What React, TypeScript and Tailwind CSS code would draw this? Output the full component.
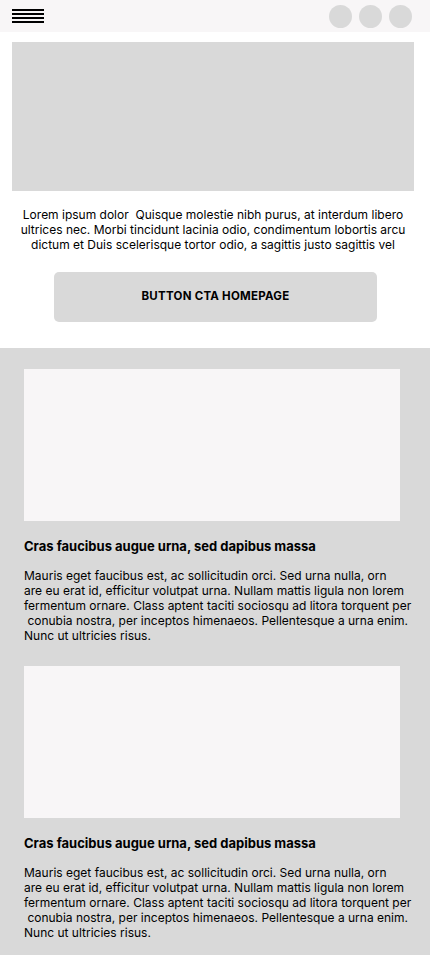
const font = { fontFamily: 'Inter, "Liberation Sans", sans-serif' };

const intro = [
  'Lorem ipsum dolor\u00a0 Quisque molestie nibh purus, at interdum libero',
  'ultrices nec. Morbi tincidunt lacinia odio, condimentum lobortis arcu',
  'dictum et Duis scelerisque tortor odio, a sagittis justo sagittis vel',
];

const body = [
  'Mauris eget faucibus est, ac sollicitudin orci. Sed urna nulla, orn',
  'are eu erat id, efficitur volutpat urna. Nullam mattis ligula non lorem',
  'fermentum ornare. Class aptent taciti sociosqu ad litora torquent per',
  ' conubia nostra, per inceptos himenaeos. Pellentesque a urna enim.',
  'Nunc ut ultricies risus.',
];

function Card() {
  return (
    <div>
      <div className="h-[152px] w-[376px] bg-[#f8f6f7]" />
      <h3 className="mt-[17px] text-[13px] font-bold leading-[16px] text-black">
        Cras faucibus augue urna, sed dapibus massa
      </h3>
      <p className="mt-[14px] whitespace-pre text-[12px] leading-[15px] text-black">
        {body.join('\n')}
      </p>
    </div>
  );
}

export default function App() {
  return (
    <div className="w-[430px] bg-white" style={font}>
      <header className="flex h-8 items-center justify-between bg-[#f8f6f7] pl-3 pr-[18px]">
        <div className="flex w-8 flex-col gap-[2.6px]">
          <span className="block h-[1.4px] bg-black" />
          <span className="block h-[1.4px] bg-black" />
          <span className="block h-[1.4px] bg-black" />
          <span className="block h-[1.4px] bg-black" />
        </div>
        <div className="flex gap-[7px]">
          <span className="h-[23px] w-[23px] rounded-full bg-[#d9d9d9]" />
          <span className="h-[23px] w-[23px] rounded-full bg-[#d9d9d9]" />
          <span className="h-[23px] w-[23px] rounded-full bg-[#d9d9d9]" />
        </div>
      </header>

      <div className="ml-3 mt-[10px] h-[149px] w-[402px] bg-[#d9d9d9]" />

      <p className="mt-4 w-[426px] whitespace-pre text-center text-[12px] leading-[15px] text-black">
        {intro.join('\n')}
      </p>

      <button className="ml-[54px] mt-5 flex h-[50px] w-[323px] items-center justify-center rounded-[5px] bg-[#d9d9d9] text-[11.5px] font-bold tracking-[0.25px] text-black">
        BUTTON CTA HOMEPAGE
      </button>

      <section className="mt-[26px] flex flex-col gap-[23px] bg-[#d9d9d9] pb-[15px] pl-6 pt-[21px]">
        <Card />
        <Card />
      </section>
    </div>
  );
}
